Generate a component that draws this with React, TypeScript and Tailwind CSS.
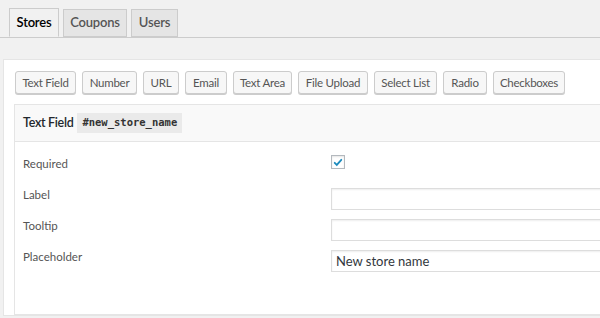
import { useState } from "react";

// widths measured from the design so the row lines up
const FIELD_TYPES = [
  { name: "Text Field", w: "w-[61px]" },
  { name: "Number", w: "w-[55px]" },
  { name: "URL", w: "w-[36px]" },
  { name: "Email", w: "w-[42px]" },
  { name: "Text Area", w: "w-[59px]" },
  { name: "File Upload", w: "w-[70px]" },
  { name: "Select List", w: "w-[63px]" },
  { name: "Radio", w: "w-[44px]" },
  { name: "Checkboxes", w: "w-[72px]" },
];

const TABS = [
  { name: "Stores", w: "w-[50px]" },
  { name: "Coupons", w: "w-[64px]" },
  { name: "Users", w: "w-[47px]" },
];

const inputClass =
  "mt-[3px] h-[22px] border border-[#ddd] bg-white px-[4px] text-[13px] text-[#32373c] shadow-[inset_0_1px_2px_rgba(0,0,0,0.07)] outline-none";

export default function App() {
  const [activeTab, setActiveTab] = useState("Stores");
  const [required, setRequired] = useState(true);
  const [label, setLabel] = useState("");
  const [tooltip, setTooltip] = useState("");
  const [placeholder, setPlaceholder] = useState("New store name");

  return (
    <div
      className="h-[318px] w-[600px] overflow-hidden bg-[#f1f1f1] text-[#444]"
      style={{ fontFamily: 'Lato, "Open Sans", sans-serif' }}
    >
      {/* Tabs */}
      <div className="mt-[8px] flex w-[640px] gap-[4px] border-b border-[#ccc] pl-[9px]">
        {TABS.map((tab) => (
          <button
            key={tab.name}
            onClick={() => setActiveTab(tab.name)}
            className={
              activeTab === tab.name
                ? `-mb-px h-[29px] ${tab.w} border border-[#ccc] border-b-[#f1f1f1] bg-[#f1f1f1] text-[13px] font-semibold tracking-[-0.2px] text-[#000]`
                : `mt-px h-[28px] ${tab.w} border border-[#ccc] bg-[#e5e5e5] text-[13px] font-semibold tracking-[-0.2px] text-[#555]`
            }
          >
            {tab.name}
          </button>
        ))}
      </div>

      {/* Panel */}
      <div className="ml-[3px] mt-[21px] w-[640px] border border-[#e5e5e5] bg-white pl-[10px] pt-[11px]">
        <div className="ml-px flex gap-[6px]">
          {FIELD_TYPES.map((type) => (
            <button
              key={type.name}
              className={`h-[23px] ${type.w} rounded-[3px] border border-[#ccc] bg-[#f7f7f7] text-[11.5px] tracking-[-0.25px] text-[#555] shadow-[0_1px_0_#ccc]`}
            >
              {type.name}
            </button>
          ))}
        </div>

        <div className="mt-[10px] border border-[#e5e5e5] pb-[36px]">
          {/* Box header */}
          <div className="flex h-[37px] items-center gap-[4px] border-b border-[#e5e5e5] bg-[#f9f9f9] px-[8px]">
            <span className="text-[12.5px] font-semibold tracking-[-0.3px] text-[#23282d]">Text Field</span>
            <code
              className="bg-[#eaeaea] px-[5px] py-[2px] text-[10.5px] font-bold text-[#333]"
              style={{ fontFamily: '"DejaVu Sans Mono", monospace' }}
            >
              #new_store_name
            </code>
          </div>

          {/* Rows */}
          <div className="grid grid-cols-[308px_1fr] auto-rows-[31px] px-[8px] pt-[12px] text-[11.5px] leading-[20px] text-[#555]">
            <div>Required</div>
            <div className="pt-[1px]">
              <button
                onClick={() => setRequired(!required)}
                className="flex h-[14px] w-[14px] items-center justify-center border border-[#b4b9be] bg-white shadow-[inset_0_1px_2px_rgba(0,0,0,0.1)]"
              >
                {required && (
                  <svg viewBox="0 0 20 20" className="h-[13px] w-[13px]">
                    <path
                      d="M4.5 10.5l3.5 3.5 7.5-8.5"
                      fill="none"
                      stroke="#1e8cbe"
                      strokeWidth="3"
                      strokeLinecap="round"
                    />
                  </svg>
                )}
              </button>
            </div>

            <div>Label</div>
            <input value={label} onChange={(e) => setLabel(e.target.value)} className={inputClass} />

            <div>Tooltip</div>
            <input value={tooltip} onChange={(e) => setTooltip(e.target.value)} className={inputClass} />

            <div>Placeholder</div>
            <input
              value={placeholder}
              onChange={(e) => setPlaceholder(e.target.value)}
              className={inputClass}
            />
          </div>
        </div>
      </div>
    </div>
  );
}
